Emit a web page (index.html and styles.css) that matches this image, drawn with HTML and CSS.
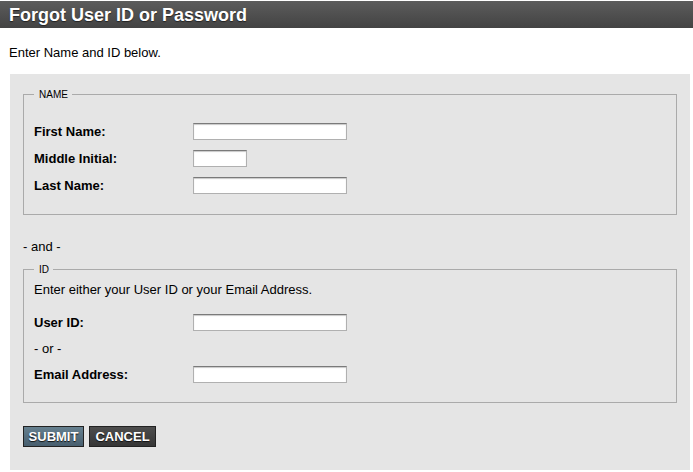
FILE: index.html
```html
<!DOCTYPE html>
<html>
<head>
<meta charset="utf-8">
<title>Forgot User ID or Password</title>
<link rel="stylesheet" href="styles.css">
</head>
<body>
<div class="header"><h1 class="title">Forgot User ID or Password</h1></div>
<p class="intro">Enter Name and ID below.</p>
<form class="panel">
  <fieldset class="group group-name">
    <legend class="legend">NAME</legend>
    <div class="rows">
      <label class="label">First Name:</label><input class="field" type="text">
      <label class="label">Middle Initial:</label><input class="field field-short" type="text">
      <label class="label">Last Name:</label><input class="field" type="text">
    </div>
  </fieldset>
  <p class="sep">- and -</p>
  <fieldset class="group group-id">
    <legend class="legend">ID</legend>
    <p class="hint">Enter either your User ID or your Email Address.</p>
    <div class="rows">
      <label class="label">User ID:</label><input class="field" type="text">
      <span class="or">- or -</span><span></span>
      <label class="label">Email Address:</label><input class="field" type="text">
    </div>
  </fieldset>
  <div class="actions">
    <button type="button" class="btn btn-submit">SUBMIT</button>
    <button type="button" class="btn btn-cancel">CANCEL</button>
  </div>
</form>
</body>
</html>
```
FILE: styles.css
```css
html, body {
  margin: 0;
  padding: 0;
  background: #fff;
}
body {
  font-family: "Liberation Sans", Arial, Helvetica, sans-serif;
  font-size: 13px;
  color: #000;
  padding-top: 1px;
}
.header {
  height: 27px;
  background: linear-gradient(#5c5c5c, #434343);
  display: flex;
  align-items: center;
  padding-left: 9px;
}
.title {
  margin: 0;
  font-size: 18px;
  font-weight: bold;
  color: #fff;
  line-height: 20px;
  text-shadow: 0 1px 1px #222;
}
.intro {
  margin: 17px 0 14px 9px;
  line-height: 15px;
}
.panel {
  margin: 0 0 0 10px;
  width: 680px;
  box-sizing: border-box;
  background: #e5e5e5;
  padding: 15px 13px 23px 13px;
}
.group {
  margin: 0;
  border: 1px solid #aaa;
  padding: 23px 10px 20px 10px;
  min-width: 0;
}
.group-id {
  padding-top: 7px;
  padding-bottom: 19px;
}
.legend {
  font-size: 10px;
  line-height: 11px;
  padding: 0 4px 0 5px;
  margin-left: 0;
  color: #000;
}
.rows {
  display: grid;
  grid-template-columns: 159px auto;
  row-gap: 10px;
  align-items: center;
  justify-items: start;
}
.label {
  font-weight: bold;
  line-height: 15px;
}
.field {
  box-sizing: border-box;
  width: 154px;
  height: 17px;
  margin: 0;
  padding: 0 2px;
  border: 1px solid #b0b0b0;
  border-top-color: #7a7a7a;
  box-shadow: inset 0 1px 1px #c8c8c8;
  background: #fff;
  font: inherit;
}
.field-short {
  width: 54px;
}
.sep {
  margin: 24px 0 10px 0;
  line-height: 15px;
}
.hint {
  margin: 0 0 17px 0;
  line-height: 15px;
}
.or {
  line-height: 15px;
}
.actions {
  display: flex;
  gap: 5px;
  margin-top: 23px;
}
.btn {
  box-sizing: border-box;
  height: 21px;
  margin: 0;
  padding: 0;
  border: 1px solid #222;
  font-family: inherit;
  font-size: 13px;
  font-weight: bold;
  color: #fff;
  text-shadow: 0 1px 1px #111;
  line-height: 19px;
  text-align: center;
}
.btn-submit {
  width: 61px;
  background: linear-gradient(#66808f, #475e6e);
}
.btn-cancel {
  width: 67px;
  background: linear-gradient(#4d4d4d, #363636);
}
```
